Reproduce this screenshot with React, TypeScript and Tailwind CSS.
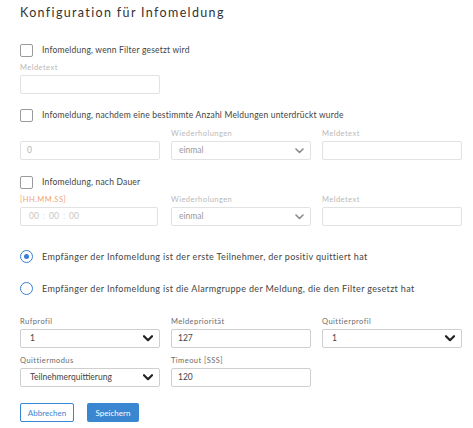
import React from 'react';

const COLS = 'grid grid-cols-[140px_140px_140px] gap-x-[11px]';

function Chevron({ bold }: { bold?: boolean }) {
  return bold ? (
    <svg width="10" height="7" viewBox="0 0 10 7" className="shrink-0">
      <path d="M1 1.2 L5 5.2 L9 1.2" fill="none" stroke="#222" strokeWidth="2.2" strokeLinecap="round" strokeLinejoin="round" />
    </svg>
  ) : (
    <svg width="9" height="6" viewBox="0 0 9 6" className="shrink-0">
      <path d="M1 1 L4.5 4.5 L8 1" fill="none" stroke="#8a8a8a" strokeWidth="1.6" strokeLinecap="round" strokeLinejoin="round" />
    </svg>
  );
}

function Label({ children, tone = 'muted' }: { children: React.ReactNode; tone?: 'muted' | 'warn' | 'active' }) {
  const color = tone === 'warn' ? 'text-[#f2a36f]' : tone === 'active' ? 'text-[#6b6b6b]' : 'text-[#b9b9b9]';
  return <div className={`h-[10px] mb-[2px] text-[7.5px] leading-[10px] tracking-[0.45px] ${color}`}>{children}</div>;
}

function Input({ value, active, w = 'w-[140px]' }: { value?: string; active?: boolean; w?: string }) {
  return (
    <div
      className={`${w} h-[19px] flex items-center pl-[6px] rounded-[2px] border bg-white text-[8.5px] ${
        active ? 'border-[#cfcfcf] text-[#444]' : 'border-[#e2e2e2] text-[#b5b5b5]'
      }`}
    >
      {value}
    </div>
  );
}

function Select({ value, active }: { value: string; active?: boolean }) {
  return (
    <div
      className={`w-[140px] h-[19px] flex items-center justify-between pr-[6px] rounded-[2px] border bg-white text-[8.5px] ${
        active ? 'pl-[9px] border-[#cfcfcf] text-[#444]' : 'pl-[7px] border-[#e2e2e2] text-[#9a9a9a]'
      }`}
    >
      <span>{value}</span>
      <Chevron bold={active} />
    </div>
  );
}

function Check({ label, className = '' }: { label: string; className?: string }) {
  return (
    <label className={`flex items-center h-[13px] ${className}`}>
      <span className="w-[13px] h-[13px] rounded-[2px] border border-[#9a9a9a] bg-white shrink-0" />
      <span className="ml-[9px] text-[8.5px] tracking-[0.2px] text-[#444]">{label}</span>
    </label>
  );
}

function Radio({ label, checked, className = '' }: { label: string; checked?: boolean; className?: string }) {
  return (
    <label className={`flex items-center h-[13px] ${className}`}>
      <span className="w-[13px] h-[13px] rounded-full border border-[#3a7fcf] bg-white shrink-0 flex items-center justify-center">
        {checked && <span className="w-[5px] h-[5px] rounded-full bg-[#3a7fcf]" />}
      </span>
      <span className="ml-[9px] text-[9px] tracking-[0.35px] text-[#444]">{label}</span>
    </label>
  );
}

export default function App() {
  return (
    <div className="w-[473px] min-h-[428px] bg-white pl-[20px] pt-[3px] font-['Lato',sans-serif]">
      <h1 className="h-[20px] text-[12.5px] leading-[20px] tracking-[1.35px] text-[#333] font-normal">
        Konfiguration für Infomeldung
      </h1>

      <Check className="mt-[21px]" label="Infomeldung, wenn Filter gesetzt wird" />
      <div className="mt-[6px]">
        <Label>Meldetext</Label>
        <Input />
      </div>

      <Check className="mt-[15px]" label="Infomeldung, nachdem eine bestimmte Anzahl Meldungen unterdrückt wurde" />
      <div className={`${COLS} mt-[7px]`}>
        <div>
          <div className="h-[12px]" />
          <Input value="0" />
        </div>
        <div>
          <Label>Wiederholungen</Label>
          <Select value="einmal" />
        </div>
        <div>
          <Label>Meldetext</Label>
          <Input />
        </div>
      </div>

      <Check className="mt-[16px]" label="Infomeldung, nach Dauer" />
      <div className={`${COLS} mt-[6px]`}>
        <div>
          <Label tone="warn">[HH.MM.SS]</Label>
          <div className="w-[138px] h-[19px] flex items-center pl-[8px] rounded-[2px] border border-[#e2e2e2] bg-white text-[8.5px] text-[#c8c8c8]">
            <span>00</span>
            <span className="mx-[4px] text-[#dcdcdc]">:</span>
            <span>00</span>
            <span className="mx-[4px] text-[#dcdcdc]">:</span>
            <span>00</span>
          </div>
        </div>
        <div>
          <Label>Wiederholungen</Label>
          <Select value="einmal" />
        </div>
        <div>
          <Label>Meldetext</Label>
          <Input />
        </div>
      </div>

      <Radio className="mt-[24px]" checked label="Empfänger der Infomeldung ist der erste Teilnehmer, der positiv quittiert hat" />
      <Radio className="mt-[19px]" label="Empfänger der Infomeldung ist die Alarmgruppe der Meldung, die den Filter gesetzt hat" />

      <div className={`${COLS} mt-[22px]`}>
        <div>
          <Label tone="active">Rufprofil</Label>
          <Select value="1" active />
        </div>
        <div>
          <Label tone="active">Meldepriorität</Label>
          <Input value="127" active />
        </div>
        <div>
          <Label tone="active">Quittierprofil</Label>
          <Select value="1" active />
        </div>
      </div>
      <div className={`${COLS} mt-[8px]`}>
        <div>
          <Label tone="active">Quittiermodus</Label>
          <Select value="Teilnehmerquittierung" active />
        </div>
        <div>
          <Label tone="active">Timeout [SSS]</Label>
          <Input value="120" active />
        </div>
      </div>

      <div className="flex gap-[13px] mt-[16px]">
        <button className="w-[54px] h-[19px] rounded-[2px] border border-[#3a86d1] bg-white text-[8px] text-[#3a86d1]">
          Abbrechen
        </button>
        <button className="w-[52px] h-[19px] rounded-[2px] bg-[#3a86d1] text-[8px] text-white">
          Speichern
        </button>
      </div>
    </div>
  );
}
